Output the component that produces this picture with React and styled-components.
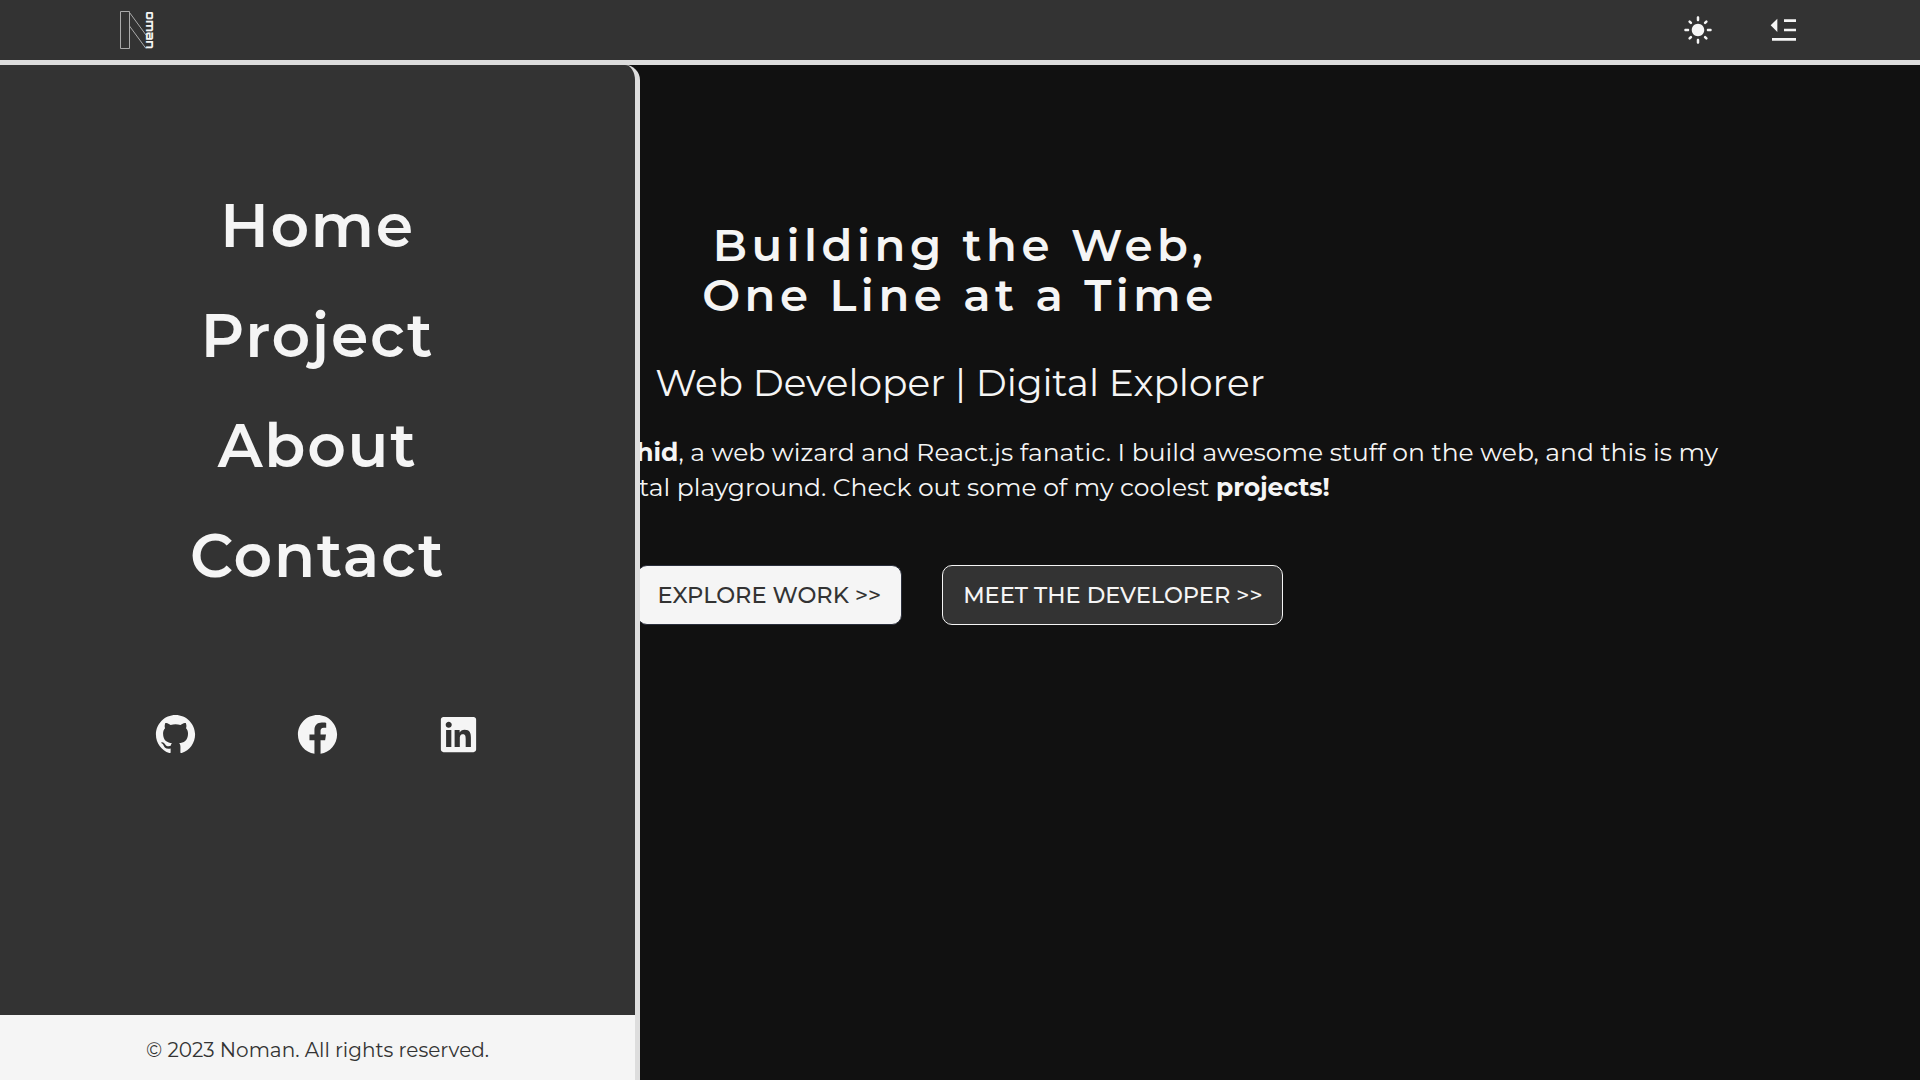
import React from "react";
import styled, { createGlobalStyle } from "styled-components";
import { RiMenuFoldFill, RiGithubFill, RiFacebookCircleFill, RiLinkedinBoxFill } from "react-icons/ri";
import { MdLightMode } from "react-icons/md";

const GlobalStyle = createGlobalStyle`
  *, *::before, *::after { box-sizing: border-box; }
  body {
    margin: 0;
    background: #111;
    color: #f5f5f5;
    font-family: "Montserrat", "Inter", "Open Sans", sans-serif;
    overflow: hidden;
  }
  h1, h2, p { margin: 0; }
  a { color: inherit; text-decoration: none; }
`;

const Page = styled.div`
  display: flex;
  flex-direction: column;
  height: 100vh;
`;

const Header = styled.header`
  display: flex;
  align-items: center;
  justify-content: space-between;
  flex: none;
  height: 65px;
  padding: 0 120px 0 119px;
  background: #333;
  border-bottom: 5px solid #ddd;
`;

const Logo = styled.svg`
  display: block;
  width: 40px;
  height: 40px;
  overflow: visible;
`;

const LogoText = styled.text`
  font-family: "Orbitron", "Inter", sans-serif;
  font-size: 12.5px;
  font-weight: 800;
  fill: #f5f5f5;
`;

const Tools = styled.div`
  display: flex;
  align-items: center;
  gap: 55px;
`;

const IconButton = styled.button`
  display: flex;
  padding: 0;
  border: 0;
  background: none;
  color: #f5f5f5;
`;

const Body = styled.div`
  position: relative;
  flex: 1;
`;

const Sidebar = styled.aside`
  position: absolute;
  inset: 0 auto 0 0;
  display: flex;
  flex-direction: column;
  width: 640px;
  background: #333;
  border-right: 5px solid #ddd;
  border-top-right-radius: 15px;
`;

const Nav = styled.nav`
  display: flex;
  flex-direction: column;
  align-items: center;
  padding-top: 105.5px;
`;

const NavLink = styled.a`
  font-size: 60px;
  font-weight: 600;
  line-height: 110px;
  letter-spacing: 1.7px;
`;

const Socials = styled.div`
  display: flex;
  justify-content: center;
  gap: 94.5px;
  margin-top: 100.5px;
  padding-right: 1px;
`;

const SocialLink = styled.a`
  display: flex;
`;

const Copyright = styled.footer`
  height: 65px;
  margin-top: auto;
  padding-top: 5px;
  background: #f5f5f5;
  color: #333;
  font-size: 20px;
  line-height: 60px;
  text-align: center;
`;

const Hero = styled.main`
  display: flex;
  flex-direction: column;
  align-items: center;
  padding-top: 155px;
`;

const Title = styled.h1`
  font-size: 45px;
  font-weight: 600;
  line-height: 50px;
  letter-spacing: 0.1em;
  text-align: center;
`;

const Subtitle = styled.h2`
  margin-top: 39px;
  font-size: 37.5px;
  font-weight: 400;
  line-height: 48px;
`;

const Intro = styled.p`
  display: flex;
  flex-direction: column;
  align-items: center;
  margin-top: 28px;
  font-size: 25px;
  line-height: 35px;
`;

const Line = styled.span`
  padding-left: ${(p) => p.$indent || 0}px;
  white-space: nowrap;
`;

const Lead = styled.span`
  display: inline-block;
  width: 476.5px;
  text-align: right;
`;

const Actions = styled.div`
  display: flex;
  gap: 40px;
  margin-top: 60px;
`;

const Action = styled.a`
  display: flex;
  align-items: center;
  height: 60px;
  padding: 0 20px;
  border: 1px solid ${(p) => (p.$solid ? "#2b2f3c" : "#f5f5f5")};
  border-radius: 10px;
  background: ${(p) => (p.$solid ? "#f5f5f5" : "#333")};
  color: ${(p) => (p.$solid ? "#333" : "#f5f5f5")};
  font-size: 22.5px;
  font-weight: 500;
  white-space: nowrap;
`;

const links = ["Home", "Project", "About", "Contact"];

const socials = [
  { label: "GitHub", Icon: RiGithubFill },
  { label: "Facebook", Icon: RiFacebookCircleFill },
  { label: "LinkedIn", Icon: RiLinkedinBoxFill },
];

export default function App() {
  return (
    <>
      <GlobalStyle />
      <Page>
        <Header>
          <Logo viewBox="0 0 40 40">
            <path
              d="M1.5 1.5H10.5V38.5H1.5Z M10.5 2.5L27 25 M10.5 16L27 38.5"
              fill="none"
              stroke="#aaa"
              strokeWidth="1"
            />
            <LogoText transform="translate(27.2 1.3) rotate(90)" textLength="37.5" lengthAdjust="spacingAndGlyphs">
              oman
            </LogoText>
          </Logo>
          <Tools>
            <IconButton aria-label="Theme">
              <MdLightMode size={30} />
            </IconButton>
            <IconButton aria-label="Menu">
              <RiMenuFoldFill size={32} />
            </IconButton>
          </Tools>
        </Header>
        <Body>
          <Hero>
            <Title>
              Building the Web,
              <br />
              One Line at a Time
            </Title>
            <Subtitle>Web Developer | Digital Explorer</Subtitle>
            <Intro>
              <Line>
                <Lead>Hello! I'm <b>Noman Rashid</b></Lead>, a web wizard and React.js fanatic. I build awesome stuff on the web, and this is my
              </Line>
              <Line $indent={1.5}>
                digital playground. Check out some of my coolest <b>projects!</b>
              </Line>
            </Intro>
            <Actions>
              <Action $solid>EXPLORE WORK &gt;&gt;</Action>
              <Action>MEET THE DEVELOPER &gt;&gt;</Action>
            </Actions>
          </Hero>
          <Sidebar>
            <Nav>
              {links.map((label) => (
                <NavLink key={label}>{label}</NavLink>
              ))}
            </Nav>
            <Socials>
              {socials.map(({ label, Icon }) => (
                <SocialLink key={label} aria-label={label}>
                  <Icon size={47} />
                </SocialLink>
              ))}
            </Socials>
            <Copyright>© 2023 Noman. All rights reserved.</Copyright>
          </Sidebar>
        </Body>
      </Page>
    </>
  );
}
